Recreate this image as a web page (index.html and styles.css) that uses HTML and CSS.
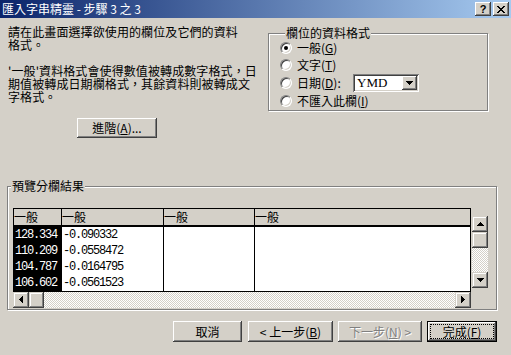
FILE: index.html
```html
<!DOCTYPE html>
<html>
<head>
<meta charset="utf-8">
<link rel="stylesheet" href="styles.css">
</head>
<body>
<div class="window">
  <div class="titlebar">
    <span class="title">匯入字串精靈 - 步驟 3 之 3</span>
    <div class="caption-btns">
      <span class="cap-btn help">?</span>
      <span class="cap-btn close"><svg width="8" height="7" viewBox="0 0 8 7" shape-rendering="crispEdges"><path d="M0 0h2v1H0z M6 0h2v1H6z M1 1h2v1H1z M5 1h2v1H5z M2 2h4v1H2z M3 3h2v1H3z M2 4h4v1H2z M1 5h2v1H1z M5 5h2v1H5z M0 6h2v1H0z M6 6h2v1H6z" fill="#000"/></svg></span>
    </div>
  </div>

  <div class="top">
    <div class="intro">
      <p class="p1"><span class="ln">請在此畫面選擇欲使用的欄位及它們的資料</span><span class="ln">格式。</span></p>
      <p class="p2"><span class="ln">'一般'資料格式會使得數值被轉成數字格式，日</span><span class="ln">期值被轉成日期欄格式，其餘資料則被轉成文</span><span class="ln">字格式。</span></p>
      <div class="btn adv">進階(<u>A</u>)...</div>
    </div>
    <div class="group format">
      <span class="group-title">欄位的資料格式</span>
      <div class="radio-row"><span class="radio checked"></span><span class="rlabel">一般(<u>G</u>)</span></div>
      <div class="radio-row"><span class="radio"></span><span class="rlabel">文字(<u>T</u>)</span></div>
      <div class="radio-row date"><span class="radio"></span><span class="rlabel date-label">日期(<u>D</u>):</span>
        <div class="combo"><span class="combo-text">YMD</span><span class="combo-btn"><svg width="7" height="4" viewBox="0 0 7 4" shape-rendering="crispEdges"><path d="M0 0h7v1H0z M1 1h5v1H1z M2 2h3v1H2z M3 3h1v1H3z" fill="#000"/></svg></span></div>
      </div>
      <div class="radio-row"><span class="radio"></span><span class="rlabel">不匯入此欄(<u>I</u>)</span></div>
    </div>
  </div>

  <div class="group preview">
    <span class="group-title">預覽分欄結果</span>
    <div class="preview-body">
      <div class="grid-col">
        <table class="grid">
          <colgroup><col class="c1"><col class="c2"><col class="c3"><col></colgroup>
          <thead>
            <tr><th>一般</th><th>一般</th><th>一般</th><th>一般</th></tr>
          </thead>
          <tbody>
            <tr><td class="sel">128.334</td><td>-0.090332</td><td></td><td></td></tr>
            <tr><td class="sel">110.209</td><td>-0.0558472</td><td></td><td></td></tr>
            <tr><td class="sel">104.787</td><td>-0.0164795</td><td></td><td></td></tr>
            <tr><td class="sel">106.602</td><td>-0.0561523</td><td></td><td></td></tr>
          </tbody>
        </table>
        <div class="hscroll">
          <span class="sb-btn"><svg width="4" height="7" viewBox="0 0 4 7" shape-rendering="crispEdges"><path d="M3 0h1v7H3z M2 1h1v5H2z M1 2h1v3H1z M0 3h1v1H0z" fill="#000"/></svg></span>
          <span class="sb-thumb h"></span>
          <span class="sb-track"></span>
          <span class="sb-btn"><svg width="4" height="7" viewBox="0 0 4 7" shape-rendering="crispEdges"><path d="M0 0h1v7H0z M1 1h1v5H1z M2 2h1v3H2z M3 3h1v1H3z" fill="#000"/></svg></span>
        </div>
      </div>
      <div class="vscroll">
        <span class="sb-btn"><svg width="7" height="4" viewBox="0 0 7 4" shape-rendering="crispEdges"><path d="M3 0h1v1H3z M2 1h3v1H2z M1 2h5v1H1z M0 3h7v1H0z" fill="#000"/></svg></span>
        <span class="sb-thumb v"></span>
        <span class="sb-track"></span>
        <span class="sb-btn"><svg width="7" height="4" viewBox="0 0 7 4" shape-rendering="crispEdges"><path d="M0 0h7v1H0z M1 1h5v1H1z M2 2h3v1H2z M3 3h1v1H3z" fill="#000"/></svg></span>
      </div>
    </div>
  </div>

  <div class="buttons">
    <div class="btn cancel">取消</div>
    <div class="btn back">&lt; 上一步(<u>B</u>)</div>
    <div class="btn next disabled">下一步(<u>N</u>) &gt;</div>
    <div class="btn finish default"><span class="focus">完成(<u>F</u>)</span></div>
  </div>
</div>
</body>
</html>
```

FILE: styles.css
```css
* { box-sizing: border-box; }
body { margin: 0; background: #d4d0c8; }

.window {
  width: 511px;
  height: 355px;
  background: #d4d0c8;
  font-family: "Noto Sans CJK TC", "Noto Sans CJK SC", sans-serif;
  font-size: 12px;
  color: #000;
  overflow: hidden;
}

u { text-decoration: underline; text-underline-offset: 1px; }

/* title bar */
.titlebar {
  height: 18px;
  background: linear-gradient(to right, #0a246a, #a6caf0);
  display: flex;
  align-items: center;
  justify-content: space-between;
  padding: 0 2px 0 2px;
}
.title { color: #fff; font-size: 12px; line-height: 18px; }
.caption-btns { display: flex; gap: 2px; }
.cap-btn {
  width: 16px;
  height: 14px;
  background: #d4d0c8;
  box-shadow: inset -1px -1px #404040, inset 1px 1px #fff, inset -2px -2px #808080, inset 2px 2px #d4d0c8;
  display: flex;
  align-items: center;
  justify-content: center;
}
.cap-btn.help {
  font-family: "Liberation Sans", sans-serif;
  font-weight: bold;
  font-size: 11px;
  line-height: 14px;
}

/* top area */
.top { display: flex; }
.intro { width: 268px; padding: 7px 0 0 8px; }
.intro p { margin: 0; letter-spacing: 0.1px; }
.intro .ln {
  display: block;
  height: 13px;
  line-height: 13px;
  white-space: nowrap;
}
.intro .p2 { margin-top: 13px; }

.btn {
  height: 21px;
  background: #d4d0c8;
  box-shadow: inset -1px -1px #404040, inset 1px 1px #fff, inset -2px -2px #808080, inset 2px 2px #d4d0c8;
  display: flex;
  align-items: center;
  justify-content: center;
  line-height: 14px;
  white-space: nowrap;
}
.btn.adv { width: 80px; height: 20px; margin: 15px 0 0 69px; }

/* group boxes */
.group {
  border: 1px solid #808080;
  box-shadow: inset 1px 1px #fff, 1px 1px #fff;
}
.group-title {
  display: table;
  background: #d4d0c8;
  line-height: 14px;
  padding: 0 1px;
  margin: -8px 0 0 4px;
}
.format {
  width: 220px;
  height: 78px;
  margin-top: 15px;
  padding-left: 11px;
}
.format .group-title { margin-left: 5px; margin-bottom: -1px; }
.radio-row { height: 17px; display: flex; align-items: center; }
.radio-row.date { height: 19px; }
.radio {
  width: 12px;
  height: 12px;
  flex: none;
  border-radius: 50%;
  border: 1px solid;
  border-color: #808080 #fff #fff #808080;
  background: #fff;
  box-shadow: inset 1px 1px #404040, inset -1px -1px #d4d0c8;
  position: relative;
}
.radio.checked::after {
  content: "";
  position: absolute;
  left: 3px;
  top: 3px;
  width: 4px;
  height: 4px;
  border-radius: 50%;
  background: #000;
}
.rlabel { margin-left: 5px; line-height: 14px; }
.date-label { width: 56px; }
.combo {
  width: 66px;
  height: 18px;
  background: #fff;
  box-shadow: inset 1px 1px #808080, inset -1px -1px #fff, inset 2px 2px #404040, inset -2px -2px #d4d0c8;
  display: flex;
  align-items: center;
  padding: 2px;
}
.combo-text {
  flex: 1;
  padding-left: 2px;
  font-family: "Liberation Serif", serif;
  font-size: 13px;
  line-height: 14px;
}
.combo-btn {
  width: 15px;
  height: 14px;
  background: #d4d0c8;
  box-shadow: inset -1px -1px #404040, inset 1px 1px #fff, inset -2px -2px #808080, inset 2px 2px #d4d0c8;
  display: flex;
  align-items: center;
  justify-content: center;
}

/* preview */
.preview {
  width: 490px;
  height: 124px;
  margin: 48px 0 0 7px;
}
.preview .group-title { margin-left: 3px; }
.preview-body { display: flex; margin-top: 15px; padding-left: 5px; }
.grid-col { width: 458px; }
.grid {
  width: 458px;
  border-collapse: collapse;
  table-layout: fixed;
  background: #fff;
  border: 1px solid #000;
}
.grid col.c1 { width: 48px; }
.grid col.c2 { width: 102px; }
.grid col.c3 { width: 91px; }
.grid th, .grid td {
  padding: 0;
  text-align: left;
  border-left: 1px solid #000;
  white-space: nowrap;
  overflow: hidden;
}
.grid th:first-child, .grid td:first-child { border-left: 0; }
.grid th {
  height: 17px;
  font-weight: normal;
  background: #d4d0c8;
  border-bottom: 2px solid #000;
  line-height: 15px;
  vertical-align: top;
}
.grid td {
  height: 16px;
  font-family: "Liberation Mono", monospace;
  font-size: 12px;
  letter-spacing: -1.2px;
  line-height: 16px;
  padding-left: 1px;
}
.grid td.sel { background: #000; color: #fff; }

.sb-btn {
  width: 16px;
  height: 16px;
  flex: none;
  background: #d4d0c8;
  box-shadow: inset -1px -1px #404040, inset 1px 1px #d4d0c8, inset -2px -2px #808080, inset 2px 2px #fff;
  display: flex;
  align-items: center;
  justify-content: center;
}
.sb-thumb {
  flex: none;
  background: #d4d0c8;
  box-shadow: inset -1px -1px #404040, inset 1px 1px #d4d0c8, inset -2px -2px #808080, inset 2px 2px #fff;
}
.sb-thumb.h { width: 15px; height: 16px; }
.sb-thumb.v { width: 16px; height: 16px; }
.sb-track {
  flex: 1;
  background-image: conic-gradient(#fff 25%, #d4d0c8 0 50%, #fff 0 75%, #d4d0c8 0);
  background-size: 2px 2px;
}
.hscroll { display: flex; height: 16px; }
.vscroll {
  display: flex;
  flex-direction: column;
  width: 16px;
  height: 72px;
  margin: 8px 0 0 1px;
}

/* bottom buttons */
.buttons {
  display: flex;
  justify-content: flex-end;
  gap: 5px;
  padding-right: 14px;
  margin-top: 11px;
}
.btn.cancel { width: 69px; }
.btn.back { width: 85px; margin-left: 1px; }
.btn.next { width: 84px; }
.btn.finish { width: 70px; }
.btn.disabled { color: #808080; text-shadow: 1px 1px #fff; }
.btn.default {
  border: 1px solid #000;
  box-shadow: inset -1px -1px #404040, inset 1px 1px #fff, inset -2px -2px #808080, inset 2px 2px #d4d0c8;
}
.btn.default .focus {
  display: flex;
  align-items: center;
  justify-content: center;
  width: calc(100% - 6px);
  height: calc(100% - 6px);
  outline: 1px dotted #000;
}
```
